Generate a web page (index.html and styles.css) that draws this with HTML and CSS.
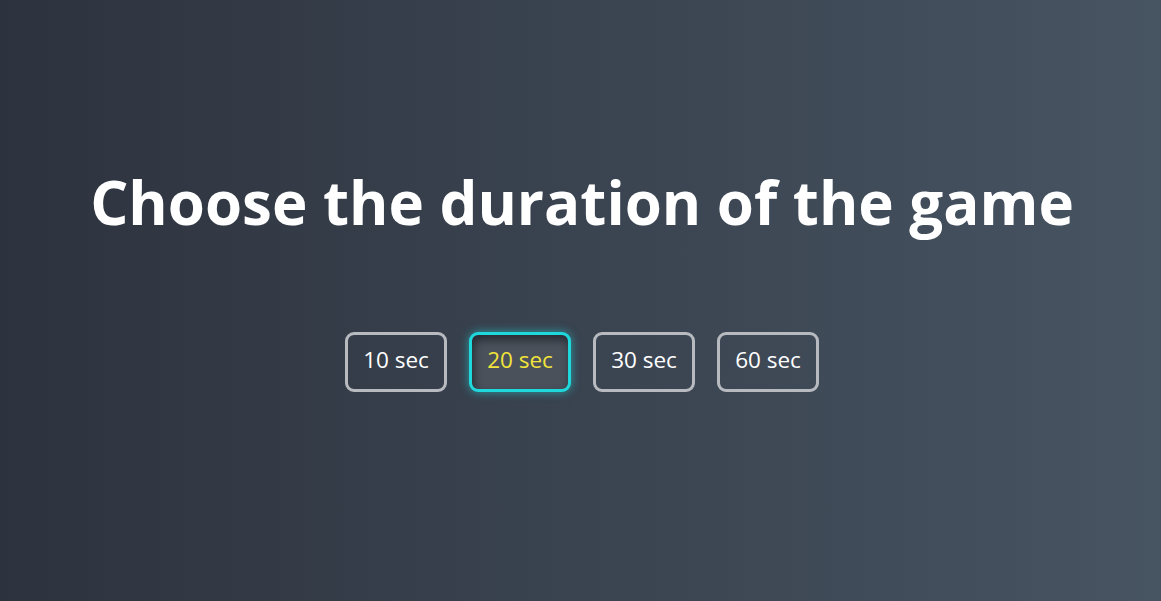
FILE: index.html
```html
<!DOCTYPE html>
<html>
<head>
<meta charset="utf-8">
<link rel="stylesheet" href="styles.css">
</head>
<body>
<main class="screen">
  <h1 class="title">Choose the duration of the game</h1>
  <div class="options">
    <button class="opt">10 sec</button>
    <button class="opt active">20 sec</button>
    <button class="opt">30 sec</button>
    <button class="opt">60 sec</button>
  </div>
</main>
</body>
</html>
```

FILE: styles.css
```css
html, body {
  margin: 0;
  padding: 0;
  height: 100%;
}
body {
  background: linear-gradient(to right, #2d333e 0%, #3a4350 50%, #475462 100%);
  font-family: "Open Sans", "Liberation Sans", sans-serif;
  color: #fff;
  overflow: hidden;
}
.screen {
  display: flex;
  flex-direction: column;
  align-items: center;
  padding-top: 166px;
  padding-left: 3px;
}
.title {
  margin: 0;
  font-size: 60px;
  line-height: 72px;
  font-weight: 700;
  color: #fff;
}
.options {
  display: flex;
  gap: 22px;
  margin-top: 94px;
}
.opt {
  width: 102px;
  height: 60px;
  box-sizing: border-box;
  border: 3px solid #b7bbc0;
  border-radius: 9px;
  background: transparent;
  color: #fff;
  font-family: "Open Sans", "Liberation Sans", sans-serif;
  font-size: 22.5px;
  line-height: 30px;
  padding: 0 0 5px;
}
.opt.active {
  border-color: #1fd8dc;
  color: #f2e43a;
  box-shadow: 0 0 10px rgba(31, 216, 220, 0.6), inset 2px 5px 9px rgba(15, 18, 24, 0.6);
  background: #4a515b;
}
```
